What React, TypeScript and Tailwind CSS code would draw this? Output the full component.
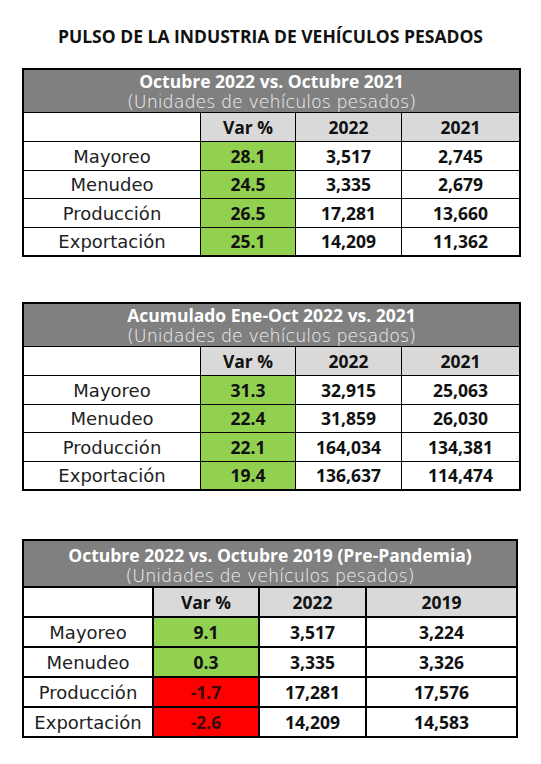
import React from "react";

type Row = { label: string; varPct: string; a: string; b: string; negative?: boolean };

interface PulseTableProps {
  title: string;
  yearA: string;
  yearB: string;
  rows: Row[];
  wide?: boolean;
}

const cell = "flex items-center justify-center";
const boldText = "font-['Open_Sans','Liberation_Sans',sans-serif] text-[17.5px] font-bold";

function PulseTable({ title, yearA, yearB, rows, wide }: PulseTableProps) {
  // table 3 has thicker rules and a narrower label column
  const grid = wide
    ? "w-[496px] gap-[2px] grid-cols-[128px_104px_105px_149px] grid-rows-[45px_28px_28px_28px_28px_28px]"
    : "w-[499px] gap-[1px] grid-cols-[176px_94px_105px_117px] grid-rows-[42px_28px_28px_27px_28px_27px]";

  return (
    <div className={`grid border-2 border-black bg-black ${grid}`}>
      <div className={`col-span-4 flex flex-col items-center bg-[#808080] ${wide ? "pt-[3px]" : ""}`}>
        <div className={`${boldText} leading-[22px] text-white`}>{title}</div>
        <div className="font-['DejaVu_Sans',sans-serif] text-[17.5px] font-extralight leading-[20px] text-[#f4f4f4]">
          (Unidades de vehículos pesados)
        </div>
      </div>

      <div className="bg-white" />
      {["Var %", yearA, yearB].map((h) => (
        <div key={h} className={`${cell} ${boldText} bg-[#d9d9d9] text-[#111]`}>
          {h}
        </div>
      ))}

      {rows.map((r) => (
        <React.Fragment key={r.label}>
          <div className={`${cell} bg-white font-['DejaVu_Sans',sans-serif] text-[18px] font-normal text-[#222]`}>
            {r.label}
          </div>
          <div
            className={`${cell} ${boldText} ${
              r.negative ? "bg-[#ff0000] text-[#3a0a0a]" : "bg-[#92d050] text-[#111]"
            }`}
          >
            {r.varPct}
          </div>
          <div className={`${cell} ${boldText} bg-white text-[#111]`}>{r.a}</div>
          <div className={`${cell} ${boldText} bg-white text-[#111]`}>{r.b}</div>
        </React.Fragment>
      ))}
    </div>
  );
}

export default function App() {
  return (
    <div className="min-h-[764px] w-[541px] bg-white pl-[22px]">
      <h1 className="h-[46px] pr-[22px] pt-[26px] text-center font-['Open_Sans','Liberation_Sans',sans-serif] text-[17.5px] font-bold leading-[20px] text-[#111]">
        PULSO DE LA INDUSTRIA DE VEHÍCULOS PESADOS
      </h1>

      <div className="mt-[22px]">
        <PulseTable
          title="Octubre 2022 vs. Octubre 2021"
          yearA="2022"
          yearB="2021"
          rows={[
            { label: "Mayoreo", varPct: "28.1", a: "3,517", b: "2,745" },
            { label: "Menudeo", varPct: "24.5", a: "3,335", b: "2,679" },
            { label: "Producción", varPct: "26.5", a: "17,281", b: "13,660" },
            { label: "Exportación", varPct: "25.1", a: "14,209", b: "11,362" },
          ]}
        />
      </div>

      <div className="mt-[45px]">
        <PulseTable
          title="Acumulado Ene-Oct 2022 vs. 2021"
          yearA="2022"
          yearB="2021"
          rows={[
            { label: "Mayoreo", varPct: "31.3", a: "32,915", b: "25,063" },
            { label: "Menudeo", varPct: "22.4", a: "31,859", b: "26,030" },
            { label: "Producción", varPct: "22.1", a: "164,034", b: "134,381" },
            { label: "Exportación", varPct: "19.4", a: "136,637", b: "114,474" },
          ]}
        />
      </div>

      <div className="mt-[48px]">
        <PulseTable
          wide
          title="Octubre 2022 vs. Octubre 2019 (Pre-Pandemia)"
          yearA="2022"
          yearB="2019"
          rows={[
            { label: "Mayoreo", varPct: "9.1", a: "3,517", b: "3,224" },
            { label: "Menudeo", varPct: "0.3", a: "3,335", b: "3,326" },
            { label: "Producción", varPct: "-1.7", a: "17,281", b: "17,576", negative: true },
            { label: "Exportación", varPct: "-2.6", a: "14,209", b: "14,583", negative: true },
          ]}
        />
      </div>
    </div>
  );
}
